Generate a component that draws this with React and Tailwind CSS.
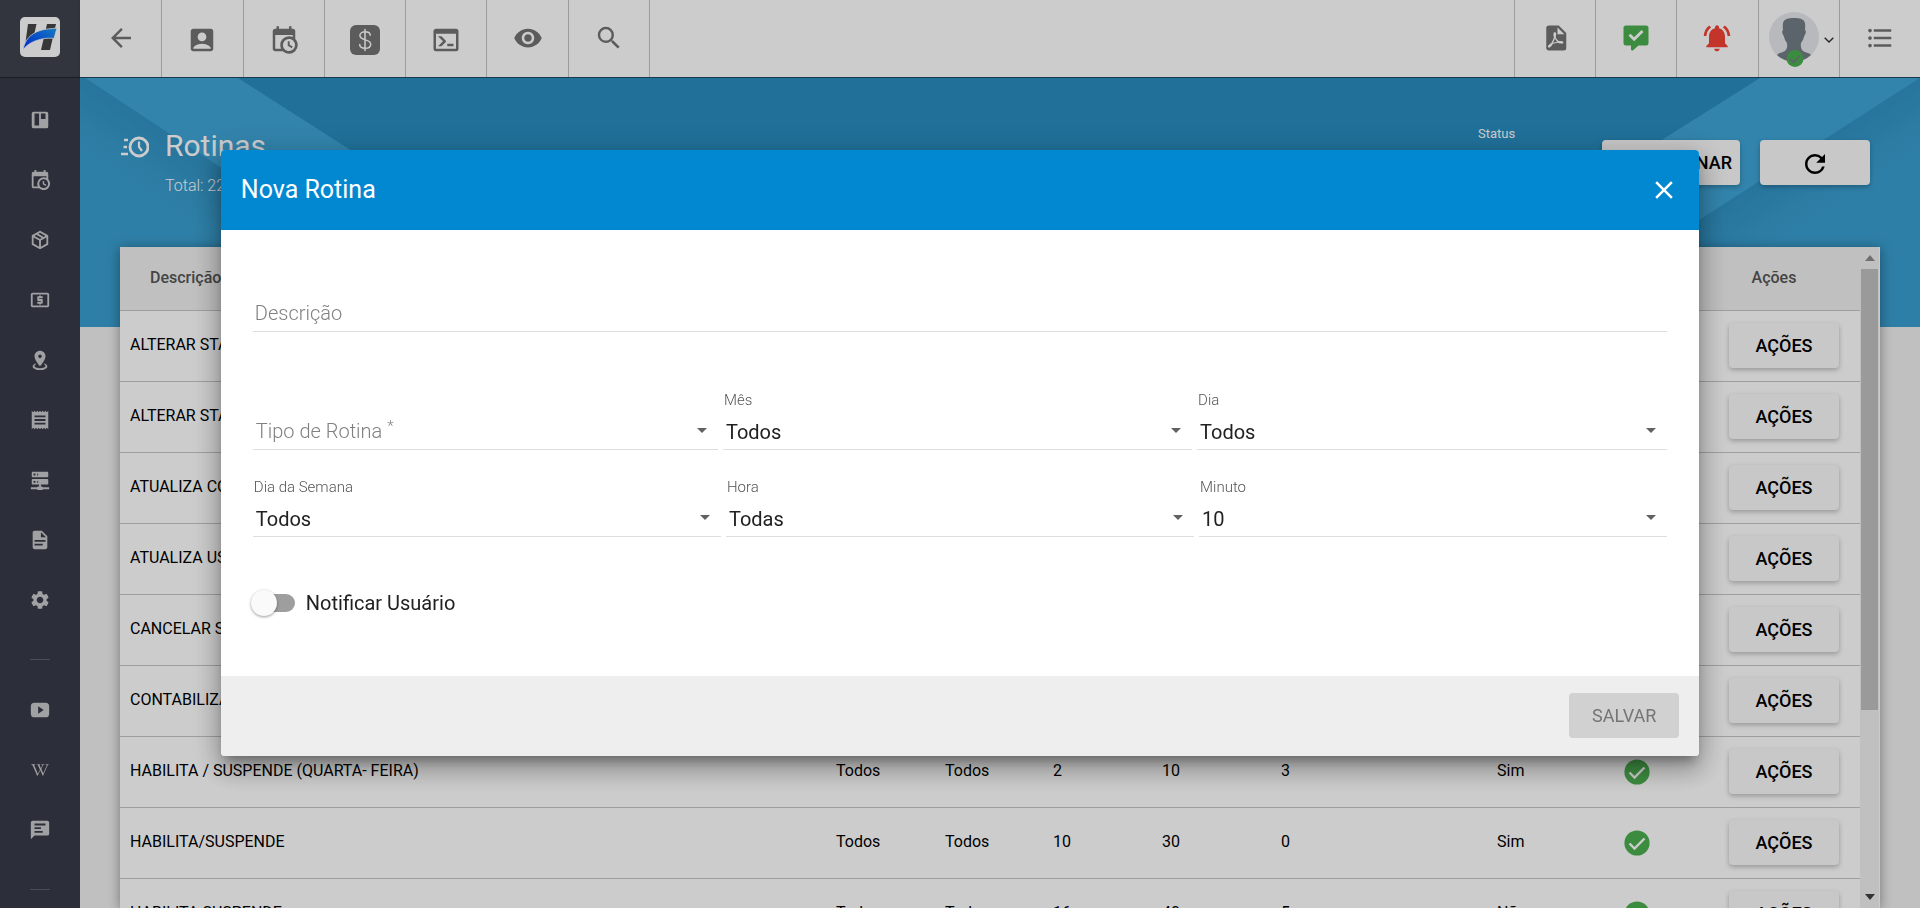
import React, { useState } from "react";
import {
  MdAccountBox,
  MdArrowBack,
  MdClose,
  MdFormatListBulleted,
  MdLocalAtm,
  MdNotificationsActive,
  MdReceipt,
  MdRefresh,
  MdSearch,
  MdSettings,
  MdVisibility,
} from "react-icons/md";
import { FaWikipediaW } from "react-icons/fa";

const paths = {
  board:
    "M5 3h14a2 2 0 0 1 2 2v14a2 2 0 0 1-2 2H5a2 2 0 0 1-2-2V5a2 2 0 0 1 2-2ZM6 5v13h5V5H6Zm7 0v6h5V5h-5Z",
  calendarClock:
    "M15,13H16.5V15.82L18.94,17.23L18.19,18.53L15,16.69V13M19,8H5V19H9.67C9.24,18.09 9,17.07 9,16A7,7 0 0,1 16,9C17.07,9 18.09,9.24 19,9.67V8M5,21C3.89,21 3,20.1 3,19V5C3,3.89 3.89,3 5,3H6V1H8V3H16V1H18V3H19A2,2 0 0,1 21,5V11.1C22.24,12.36 23,14.09 23,16A7,7 0 0,1 16,23C14.09,23 12.36,22.24 11.1,21H5M16,11.15A4.85,4.85 0 0,0 11.15,16C11.15,18.68 13.32,20.85 16,20.85A4.85,4.85 0 0,0 20.85,16C20.85,13.32 18.68,11.15 16,11.15Z",
  box: "M21,16.5C21,16.88 20.79,17.21 20.47,17.38L12.57,21.82C12.41,21.94 12.21,22 12,22C11.79,22 11.59,21.94 11.43,21.82L3.53,17.38C3.21,17.21 3,16.88 3,16.5V7.5C3,7.12 3.21,6.79 3.53,6.62L11.43,2.18C11.59,2.06 11.79,2 12,2C12.21,2 12.41,2.06 12.57,2.18L20.47,6.62C20.79,6.79 21,7.12 21,7.5V16.5M12,4.15L10.11,5.22L16,8.61L17.96,7.5L12,4.15M6.04,7.5L12,10.85L13.96,9.75L8.08,6.35L6.04,7.5M5,15.91L11,19.29V12.58L5,9.21V15.91M19,15.91V9.21L13,12.58V19.29L19,15.91Z",
  marker:
    "M12,2C15.31,2 18,4.66 18,7.95C18,12.41 12,19 12,19C12,19 6,12.41 6,7.95C6,4.66 8.69,2 12,2M12,6A2,2 0 0,0 10,8A2,2 0 0,0 12,10A2,2 0 0,0 14,8A2,2 0 0,0 12,6M20,19C20,21.21 16.42,23 12,23C7.58,23 4,21.21 4,19C4,17.71 5.22,16.56 7.11,15.83L7.75,16.74C6.67,17.19 6,17.81 6,18.5C6,19.88 8.69,21 12,21C15.31,21 18,19.88 18,18.5C18,17.81 17.33,17.19 16.25,16.74L16.89,15.83C18.78,16.56 20,17.71 20,19Z",
  server:
    "M13,19H14A1,1 0 0,1 15,20H22V22H15A1,1 0 0,1 14,23H10A1,1 0 0,1 9,22H2V20H9A1,1 0 0,1 10,19H11V17H4A1,1 0 0,1 3,16V12A1,1 0 0,1 4,11H20A1,1 0 0,1 21,12V16A1,1 0 0,1 20,17H13V19M4,3H20A1,1 0 0,1 21,4V8A1,1 0 0,1 20,9H4A1,1 0 0,1 3,8V4A1,1 0 0,1 4,3M9,7H10V5H9V7M9,15H10V13H9V15M5,5V7H7V5H5M5,13V15H7V13H5Z",
  document:
    "M13,9H18.5L13,3.5V9M6,2H14L20,8V20A2,2 0 0,1 18,22H6C4.89,22 4,21.1 4,20V4C4,2.89 4.89,2 6,2M15,18V16H6V18H15M18,14V12H6V14H18Z",
  video:
    "M6 4h12a4 4 0 0 1 4 4v8a4 4 0 0 1-4 4H6a4 4 0 0 1-4-4V8a4 4 0 0 1 4-4ZM10 8v8l6-4-6-4Z",
  chat: "M20 2H4a2 2 0 0 0-2 2v18l4-4h14a2 2 0 0 0 2-2V4a2 2 0 0 0-2-2ZM6 5v2h12V5H6Zm0 4v2h7V9H6Zm0 4v2h9v-2H6Z",
  console:
    "M20,19V7H4V19H20M20,3A2,2 0 0,1 22,5V19A2,2 0 0,1 20,21H4A2,2 0 0,1 2,19V5C2,3.89 2.9,3 4,3H20M13,17V15H18V17H13M9.58,13L5.57,9H8.4L11.7,12.3C12.09,12.69 12.09,13.33 11.7,13.72L8.42,17H5.59L9.58,13Z",
  pdf: "M14,9H19.5L14,3.5V9M7,2H15L21,8V20A2,2 0 0,1 19,22H7C5.89,22 5,21.1 5,20V4A2,2 0 0,1 7,2M11.93,12.44C12.34,13.34 12.86,14.08 13.46,14.59L13.87,14.91C13,15.07 11.8,15.35 10.53,15.84L10.42,15.88L10.92,14.84C11.37,13.97 11.7,13.18 11.93,12.44M18.41,16.25C18.59,16.07 18.68,15.84 18.69,15.59C18.72,15.39 18.67,15.2 18.57,15.04C18.28,14.57 17.53,14.35 16.29,14.35L15,14.42L14.13,13.84C13.5,13.32 12.93,12.41 12.53,11.28L12.57,11.14C12.9,9.81 13.21,8.2 12.55,7.54C12.39,7.38 12.17,7.3 11.94,7.3H11.7C11.33,7.3 11,7.69 10.91,8.07C10.54,9.4 10.76,10.13 11.13,11.34C10.88,12.23 10.56,13.25 10.05,14.28L9.09,16.08L8.2,16.57C7,17.32 6.43,18.16 6.32,18.69C6.28,18.88 6.3,19.05 6.37,19.23L6.4,19.28L6.88,19.59L7.32,19.7C8.13,19.7 9.05,18.75 10.29,16.63L10.47,16.56C11.5,16.23 12.78,16 14.5,15.81C15.53,16.32 16.74,16.55 17.5,16.55C17.94,16.55 18.24,16.44 18.41,16.25Z",
  commentCheck:
    "M4 2h16a2 2 0 0 1 2 2v12a2 2 0 0 1-2 2h-6l-4.3 3.7A1 1 0 0 1 8 21v-3H4a2 2 0 0 1-2-2V4a2 2 0 0 1 2-2ZM10.5 14.6 18 7.1l-1.6-1.6-5.9 5.9-2.9-2.9L6 10.1l4.5 4.5Z",
};

const Icon = ({ name, className }) => (
  <svg viewBox="0 0 24 24" fill="currentColor" fillRule="evenodd" className={className}>
    <path d={paths[name]} />
  </svg>
);

const DollarIcon = () => (
  <svg viewBox="0 0 30 30" fill="none" className="size-[30px]">
    <rect width="30" height="30" rx="6" fill="currentColor" />
    <path
      d="M15 4.5v21M20.2 10.2c0-2-2.1-3.5-5-3.5s-5.3 1.500-5.300 3.900c0 5.600 10.800 3 10.800 8.600 0 2.500-2.400 4.100-5.600 4.100s-5.400-1.500-5.400-3.700"
      stroke="#fff"
      strokeWidth="1.500"
      strokeLinecap="round"
    />
  </svg>
);

const Logo = () => (
  <svg viewBox="0 0 40 40" className="size-10">
    <rect width="40" height="40" rx="5" fill="#fff" />
    <path d="M8 7h8.500l-2 9-9 9ZM27 7h9l-6 26h-9l3-13Z" fill="#454545" />
    <path
      d="M3 32.500C5 23 10 17 20 13.500c6-2 11-1.500 17-2.500l-3 10.500c-3-.5-8-.5-13 .7-7 1.800-13 4.300-18 10.300Z"
      fill="url(#swoosh)"
      stroke="#fff"
      strokeWidth=".8"
    />
    <defs>
      <linearGradient id="swoosh" x1="0" y1="1" x2="1" y2="0">
        <stop offset="0" stopColor="#0030ff" />
        <stop offset="1" stopColor="#1a9cf0" />
      </linearGradient>
    </defs>
  </svg>
);

const Avatar = () => (
  <svg viewBox="0 0 50 55" className="h-[55px] w-[50px]">
    <circle cx="25" cy="25" r="25" fill="#e6e8ed" />
    <path
      d="M14 11c1-4 5-5 11-5s10 1 11 5c.4 3 .2 5 0 7 1.500 1 .8 4-.8 6-.6 3-1.800 5-3.200 7-.5 4 0 6 2 8 2 1.500 6 1.500 8 4a25 25 0 0 1-34 0c2-2.500 6-2.500 8-4 2-2 2.500-4 2-8-1.400-2-2.600-4-3.200-7-1.600-2-2.300-5-.8-6-.2-2-.4-4 0-7Z"
      fill="#747d86"
    />
    <circle cx="26" cy="46.500" r="8.500" fill="#4caf50" />
    <path d="m21 47 3.500 3.500 6.500-7" fill="none" stroke="#747d86" strokeWidth="1.800" />
  </svg>
);

const CheckCircle = () => (
  <svg viewBox="0 0 26 26" className="size-[26px]" role="img" aria-label="Ativo">
    <circle cx="13" cy="13" r="12.600" fill="#4caf50" />
    <path d="m5.500 13.500 5 5L20.500 8.500" fill="none" stroke="#fff" strokeWidth="2.400" />
  </svg>
);

const RoutineIcon = () => (
  <svg viewBox="0 0 28 24" fill="none" stroke="currentColor" className="h-6 w-7">
    <circle cx="18" cy="12" r="9" strokeWidth="2.800" />
    <path d="M18 6.500V12l3 4" strokeWidth="2.200" />
    <path d="M3 5h4M2.500 12H6M0 19h7" strokeWidth="2.600" />
  </svg>
);

const sidebarIcons = [
  <Icon name="board" className="size-[22px]" />,
  <Icon name="calendarClock" className="size-[22px]" />,
  <Icon name="box" className="size-[22px]" />,
  <MdLocalAtm size={22} />,
  <Icon name="marker" className="size-[22px]" />,
  <MdReceipt size={22} />,
  <Icon name="server" className="size-[22px]" />,
  <Icon name="document" className="size-[22px]" />,
  <MdSettings size={22} />,
];

const supportIcons = [
  <Icon name="video" className="size-[22px]" />,
  <FaWikipediaW size={18} />,
  <Icon name="chat" className="size-[22px]" />,
];

const toolbarIcons = [
  { icon: <MdArrowBack size={30} />, align: "pb-0.5" },
  { icon: <MdAccountBox size={30} />, align: "pt-0.5" },
  { icon: <Icon name="calendarClock" className="size-[30px]" />, align: "pt-0.5" },
  { icon: <DollarIcon />, align: "pt-0.5" },
  { icon: <Icon name="console" className="size-[30px]" />, align: "pt-0.5" },
  { icon: <MdVisibility size={30} />, align: "pb-0.5" },
  { icon: <MdSearch size={30} />, align: "pb-0.5" },
];

// descrição, mês, dia, hora, minuto, dia da semana, notificar
const routines = [
  ["ALTERAR STATUS", "Todos", "Todos", "1", "0", "1", "Sim"],
  ["ALTERAR STATUS", "Todos", "Todos", "2", "0", "1", "Sim"],
  ["ATUALIZA CONTRATOS", "Todos", "Todos", "3", "10", "2", "Sim"],
  ["ATUALIZA USUÁRIOS", "Todos", "Todos", "4", "10", "2", "Sim"],
  ["CANCELAR SERVIÇOS", "Todos", "Todos", "5", "20", "3", "Sim"],
  ["CONTABILIZAR", "Todos", "Todos", "6", "20", "3", "Sim"],
  ["HABILITA / SUSPENDE (QUARTA- FEIRA)", "Todos", "Todos", "2", "10", "3", "Sim"],
  ["HABILITA/SUSPENDE", "Todos", "Todos", "10", "30", "0", "Sim"],
  ["HABILITA SUSPENDE", "Todos", "Todos", "16", "40", "5", "Não"],
];

const columns = [
  { label: "Descrição", width: "px-[30px]" },
  { label: "Mês", width: "w-[109px] px-[10px]" },
  { label: "Dia", width: "w-[108px] px-[10px]" },
  { label: "Hora", width: "w-[109px] px-[10px]" },
  { label: "Minuto", width: "w-[119px] px-[10px]" },
  { label: "Dia da Semana", width: "w-[216px] px-[10px]" },
  { label: "Notificar", width: "w-[125px] px-[10px]" },
  { label: "Status", width: "w-[100px] px-[10px]" },
];

const Sidebar = () => (
  <aside className="flex w-20 shrink-0 flex-col bg-[#373a48] text-[#c8cacc]">
    <a
      href="#"
      aria-label="Início"
      className="flex h-[78px] shrink-0 items-center justify-center border-b border-[#22242e] bg-[#3f434e] pb-1"
    >
      <Logo />
    </a>
    <nav className="flex flex-col items-center pt-3">
      {sidebarIcons.map((icon, i) => (
        <button key={i} type="button" className="flex h-[60px] w-full items-center justify-center">
          {icon}
        </button>
      ))}
      <hr className="mt-[29px] mb-5 w-5 border-[#5d606c]" />
      {supportIcons.map((icon, i) => (
        <button key={i} type="button" className="flex h-[60px] w-full items-center justify-center">
          {icon}
        </button>
      ))}
      <hr className="mt-[29px] mb-5 w-5 border-[#5d606c]" />
    </nav>
  </aside>
);

const Toolbar = () => (
  <header className="relative flex h-[78px] shrink-0 justify-between border-b border-[#1b4a68] bg-white pl-px text-[#747474] shadow">
    <div className="grid w-[569px] grid-cols-7">
      {toolbarIcons.map(({ icon, align }, i) => (
        <button key={i} type="button" className={`flex items-center justify-center border-r border-[#c4c4c4] ${align}`}>
          {icon}
        </button>
      ))}
    </div>
    <div className="grid w-[406px] grid-cols-5">
      <button type="button" aria-label="PDF" className="flex items-center justify-center border-l border-[#c4c4c4] pb-0.5">
        <Icon name="pdf" className="size-[30px]" />
      </button>
      <button type="button" aria-label="Mensagens" className="flex items-center justify-center border-l border-[#c4c4c4] pb-0.5 text-[#4caf50]">
        <Icon name="commentCheck" className="size-[30px]" />
      </button>
      <button type="button" aria-label="Notificações" className="flex items-center justify-center border-l border-[#c4c4c4] pb-0.5 text-[#f44336]">
        <MdNotificationsActive size={32} />
      </button>
      <button type="button" aria-label="Perfil" className="flex items-center justify-end gap-[5px] border-l border-[#c4c4c4] pt-0.5 pr-[5px]">
        <Avatar />
        <svg viewBox="0 0 10 6" fill="none" stroke="#333" strokeWidth="1.400" className="h-[6px] w-[10px]">
          <path d="m.7.7 4.300 4.300L9.300.7" />
        </svg>
      </button>
      <button type="button" aria-label="Menu" className="flex items-center justify-center border-l border-[#c4c4c4] pb-0.5">
        <MdFormatListBulleted size={30} />
      </button>
    </div>
  </header>
);

const HeroBackground = () => (
  <svg
    viewBox="0 0 1840 249"
    preserveAspectRatio="none"
    className="absolute inset-x-0 top-0 h-[249px] w-full"
    aria-hidden="true"
  >
    <defs>
      <linearGradient id="edgeLeft" gradientUnits="userSpaceOnUse" x1="194" y1="124" x2="160" y2="175">
        <stop offset="0" stopColor="#3192c4" />
        <stop offset="1" stopColor="#3a9fd1" />
      </linearGradient>
      <linearGradient id="edgeRight" gradientUnits="userSpaceOnUse" x1="1646" y1="124" x2="1680" y2="175">
        <stop offset="0" stopColor="#3192c4" />
        <stop offset="1" stopColor="#3a9fd1" />
      </linearGradient>
    </defs>
    <rect width="1840" height="249" fill="#288dc1" />
    <path d="M0 0h5l378 249H0Z" fill="url(#edgeLeft)" />
    <path d="M5 0h153l389 249H383Z" fill="#3fa5d7" />
    <path d="M1840 0v249h-387Z" fill="url(#edgeRight)" />
    <path d="M1680 0h160l-387 249h-168Z" fill="#3fa5d7" />
  </svg>
);

const RoutineTable = () => (
  <div className="mx-10 flex min-h-0 flex-1 bg-white pr-px shadow-[0_2px_12px_rgba(0,0,0,0.4)]">
    <div className="min-w-0 flex-1 overflow-hidden">
      <table className="w-full table-fixed border-collapse text-left text-[16px] text-black">
        <thead>
          <tr className="h-[63px] border-b border-[#c6c6c6] bg-[#f0f0f0] text-[#555]">
            {columns.map((col) => (
              <th key={col.label} className={`font-medium whitespace-nowrap ${col.width}`}>
                {col.label}
              </th>
            ))}
            <th className="w-[148px] pr-6 text-center font-medium">Ações</th>
          </tr>
        </thead>
        <tbody>
          {routines.map((row, i) => (
            <tr key={i} className="h-[71px] border-b border-[#c6c6c6]">
              {row.map((value, j) => (
                <td key={j} className="px-[10px] pb-0.5 whitespace-nowrap">
                  {value}
                </td>
              ))}
              <td className="px-3">
                <CheckCircle />
              </td>
              <td className="pl-[17px]">
                <button
                  type="button"
                  className="h-[45px] w-[110px] rounded bg-[#fafafa] text-[18px] font-medium shadow-[0_2px_5px_rgba(0,0,0,0.26)]"
                >
                  AÇÕES
                </button>
              </td>
            </tr>
          ))}
        </tbody>
      </table>
    </div>
    <div className="flex w-[19px] flex-col items-center bg-[#f1f1f1]" aria-hidden="true">
      <svg viewBox="0 0 10 6" className="my-2 h-[6px] w-[10px] fill-[#8c8c8c]">
        <path d="M0 6 5 0l5 6Z" />
      </svg>
      <div className="h-2/3 w-[17px] bg-[#c1c1c1]" />
      <svg viewBox="0 0 10 6" className="mt-auto mb-2 h-[6px] w-[10px] fill-[#404040]">
        <path d="M0 0h10L5 6Z" />
      </svg>
    </div>
  </div>
);

const SelectArrow = () => (
  <svg viewBox="0 0 10 5" className="pointer-events-none absolute right-[11px] bottom-[17px] h-[5px] w-[10px] fill-[#616161]">
    <path d="M0 0h10L5 5Z" />
  </svg>
);

const SelectField = ({ id, label, options }) => (
  <div className="relative flex flex-col">
    <label htmlFor={id} className="pl-px text-[15px] leading-5 font-light text-[#555]">
      {label}
    </label>
    <select
      id={id}
      className="h-10 appearance-none border-b border-[#dedede] bg-transparent pt-1 pl-[3px] text-[20px] text-[#212121] outline-none"
    >
      {options.map((option) => (
        <option key={option}>{option}</option>
      ))}
    </select>
    <SelectArrow />
  </div>
);

const RoutineModal = () => {
  const [notify, setNotify] = useState(false);

  return (
    <div className="fixed inset-0 flex items-center justify-center bg-black/20 pb-0.5">
      <div
        role="dialog"
        aria-labelledby="modal-title"
        className="w-[77%] overflow-hidden rounded bg-white shadow-[0_8px_10px_-4px_rgba(0,0,0,0.3),0_14px_24px_2px_rgba(0,0,0,0.2),0_5px_30px_5px_rgba(0,0,0,0.16)]"
      >
        <div className="flex h-20 items-center justify-between bg-[#0288d1] px-5 text-white">
          <h2 id="modal-title" className="text-[25px]">
            Nova Rotina
          </h2>
          <button type="button" aria-label="Fechar">
            <MdClose size={30} />
          </button>
        </div>

        <form className="px-8 pt-[68px] pb-[60px]">
          <input
            type="text"
            aria-label="Descrição"
            placeholder="Descrição"
            className="h-[34px] w-full border-b border-[#dedede] pb-[3px] pl-0.5 text-[20px] outline-none placeholder:font-light placeholder:text-[#808080]"
          />

          <div className="mt-[58px] grid grid-cols-[465fr_469fr_470fr] gap-[5px]">
            <div className="relative flex flex-col justify-end">
              <label
                htmlFor="tipo"
                className="pointer-events-none absolute bottom-[5px] left-[3px] text-[20px] leading-7 font-light text-[#808080]"
              >
                Tipo de Rotina <sup className="text-[15px]">*</sup>
              </label>
              <select id="tipo" className="h-10 appearance-none border-b border-[#dedede] bg-transparent outline-none">
                <option value=""></option>
              </select>
              <SelectArrow />
            </div>
            <SelectField id="mes" label="Mês" options={["Todos"]} />
            <SelectField id="dia" label="Dia" options={["Todos"]} />
          </div>

          <div className="mt-[27px] grid grid-cols-3 gap-[5px]">
            <SelectField id="semana" label="Dia da Semana" options={["Todos"]} />
            <SelectField id="hora" label="Hora" options={["Todas"]} />
            <SelectField id="minuto" label="Minuto" options={["10"]} />
          </div>

          <label className="mt-[53px] flex h-[26px] w-fit items-center text-[20px] text-[#212121]">
            <input
              type="checkbox"
              checked={notify}
              onChange={(e) => setNotify(e.target.checked)}
              className="sr-only"
            />
            <span className="relative mr-[11px] h-[18px] w-[42px] rounded-full bg-[#9e9e9e]">
              <span
                className={`absolute -top-1 -left-[2px] size-[26px] rounded-full bg-[#fafafa] shadow-[0_1px_3px_rgba(0,0,0,0.4)] ${
                  notify ? "translate-x-5" : "translate-x-0"
                }`}
              />
            </span>
            Notificar Usuário
          </label>
        </form>

        <div className="flex h-20 items-center justify-end bg-[#eee] px-5 pb-px">
          <button
            type="button"
            disabled
            className="h-[45px] w-[110px] rounded bg-[#d1d1d1] text-[18px] text-[#757575]"
          >
            SALVAR
          </button>
        </div>
      </div>
    </div>
  );
};

export default function App() {
  return (
    <div className="flex h-screen overflow-hidden bg-[#f1f1f1] font-['Roboto',sans-serif]">
      <Sidebar />

      <div className="flex min-w-0 flex-1 flex-col">
        <Toolbar />

        <main className="relative flex min-h-0 flex-1 flex-col">
          <HeroBackground />

          <div className="relative flex h-[169px] shrink-0 items-start justify-between pr-[50px] pl-[41px] text-white">
            <div className="flex gap-4 pt-12">
              <div className="pt-[9px]">
                <RoutineIcon />
              </div>
              <div>
                <h1 className="text-[30px] leading-10">Rotinas</h1>
                <p className="mt-1.5 text-[16px] leading-7 font-light">Total: 22</p>
              </div>
            </div>

            <div className="flex gap-5 pt-[46px]">
              <div className="flex w-[104px] flex-col">
                <label htmlFor="status" className="text-[13px] leading-5">
                  Status
                </label>
                <select id="status" className="mt-3 appearance-none text-[16px]">
                  <option>Todos</option>
                </select>
              </div>
              <button
                type="button"
                className="mt-4 h-[45px] w-[138px] rounded bg-[#fafafa] pr-2 text-right text-[18px] font-medium text-black shadow-[0_2px_5px_rgba(0,0,0,0.26)]"
              >
                + ADICIONAR
              </button>
              <button
                type="button"
                aria-label="Atualizar"
                className="mt-4 flex h-[45px] w-[110px] items-center justify-center rounded bg-[#fafafa] pt-0.5 text-black shadow-[0_2px_5px_rgba(0,0,0,0.26)]"
              >
                <MdRefresh size={30} />
              </button>
            </div>
          </div>

          <div className="relative flex min-h-0 flex-1 flex-col">
            <RoutineTable />
          </div>
        </main>
      </div>

      <RoutineModal />
    </div>
  );
}
